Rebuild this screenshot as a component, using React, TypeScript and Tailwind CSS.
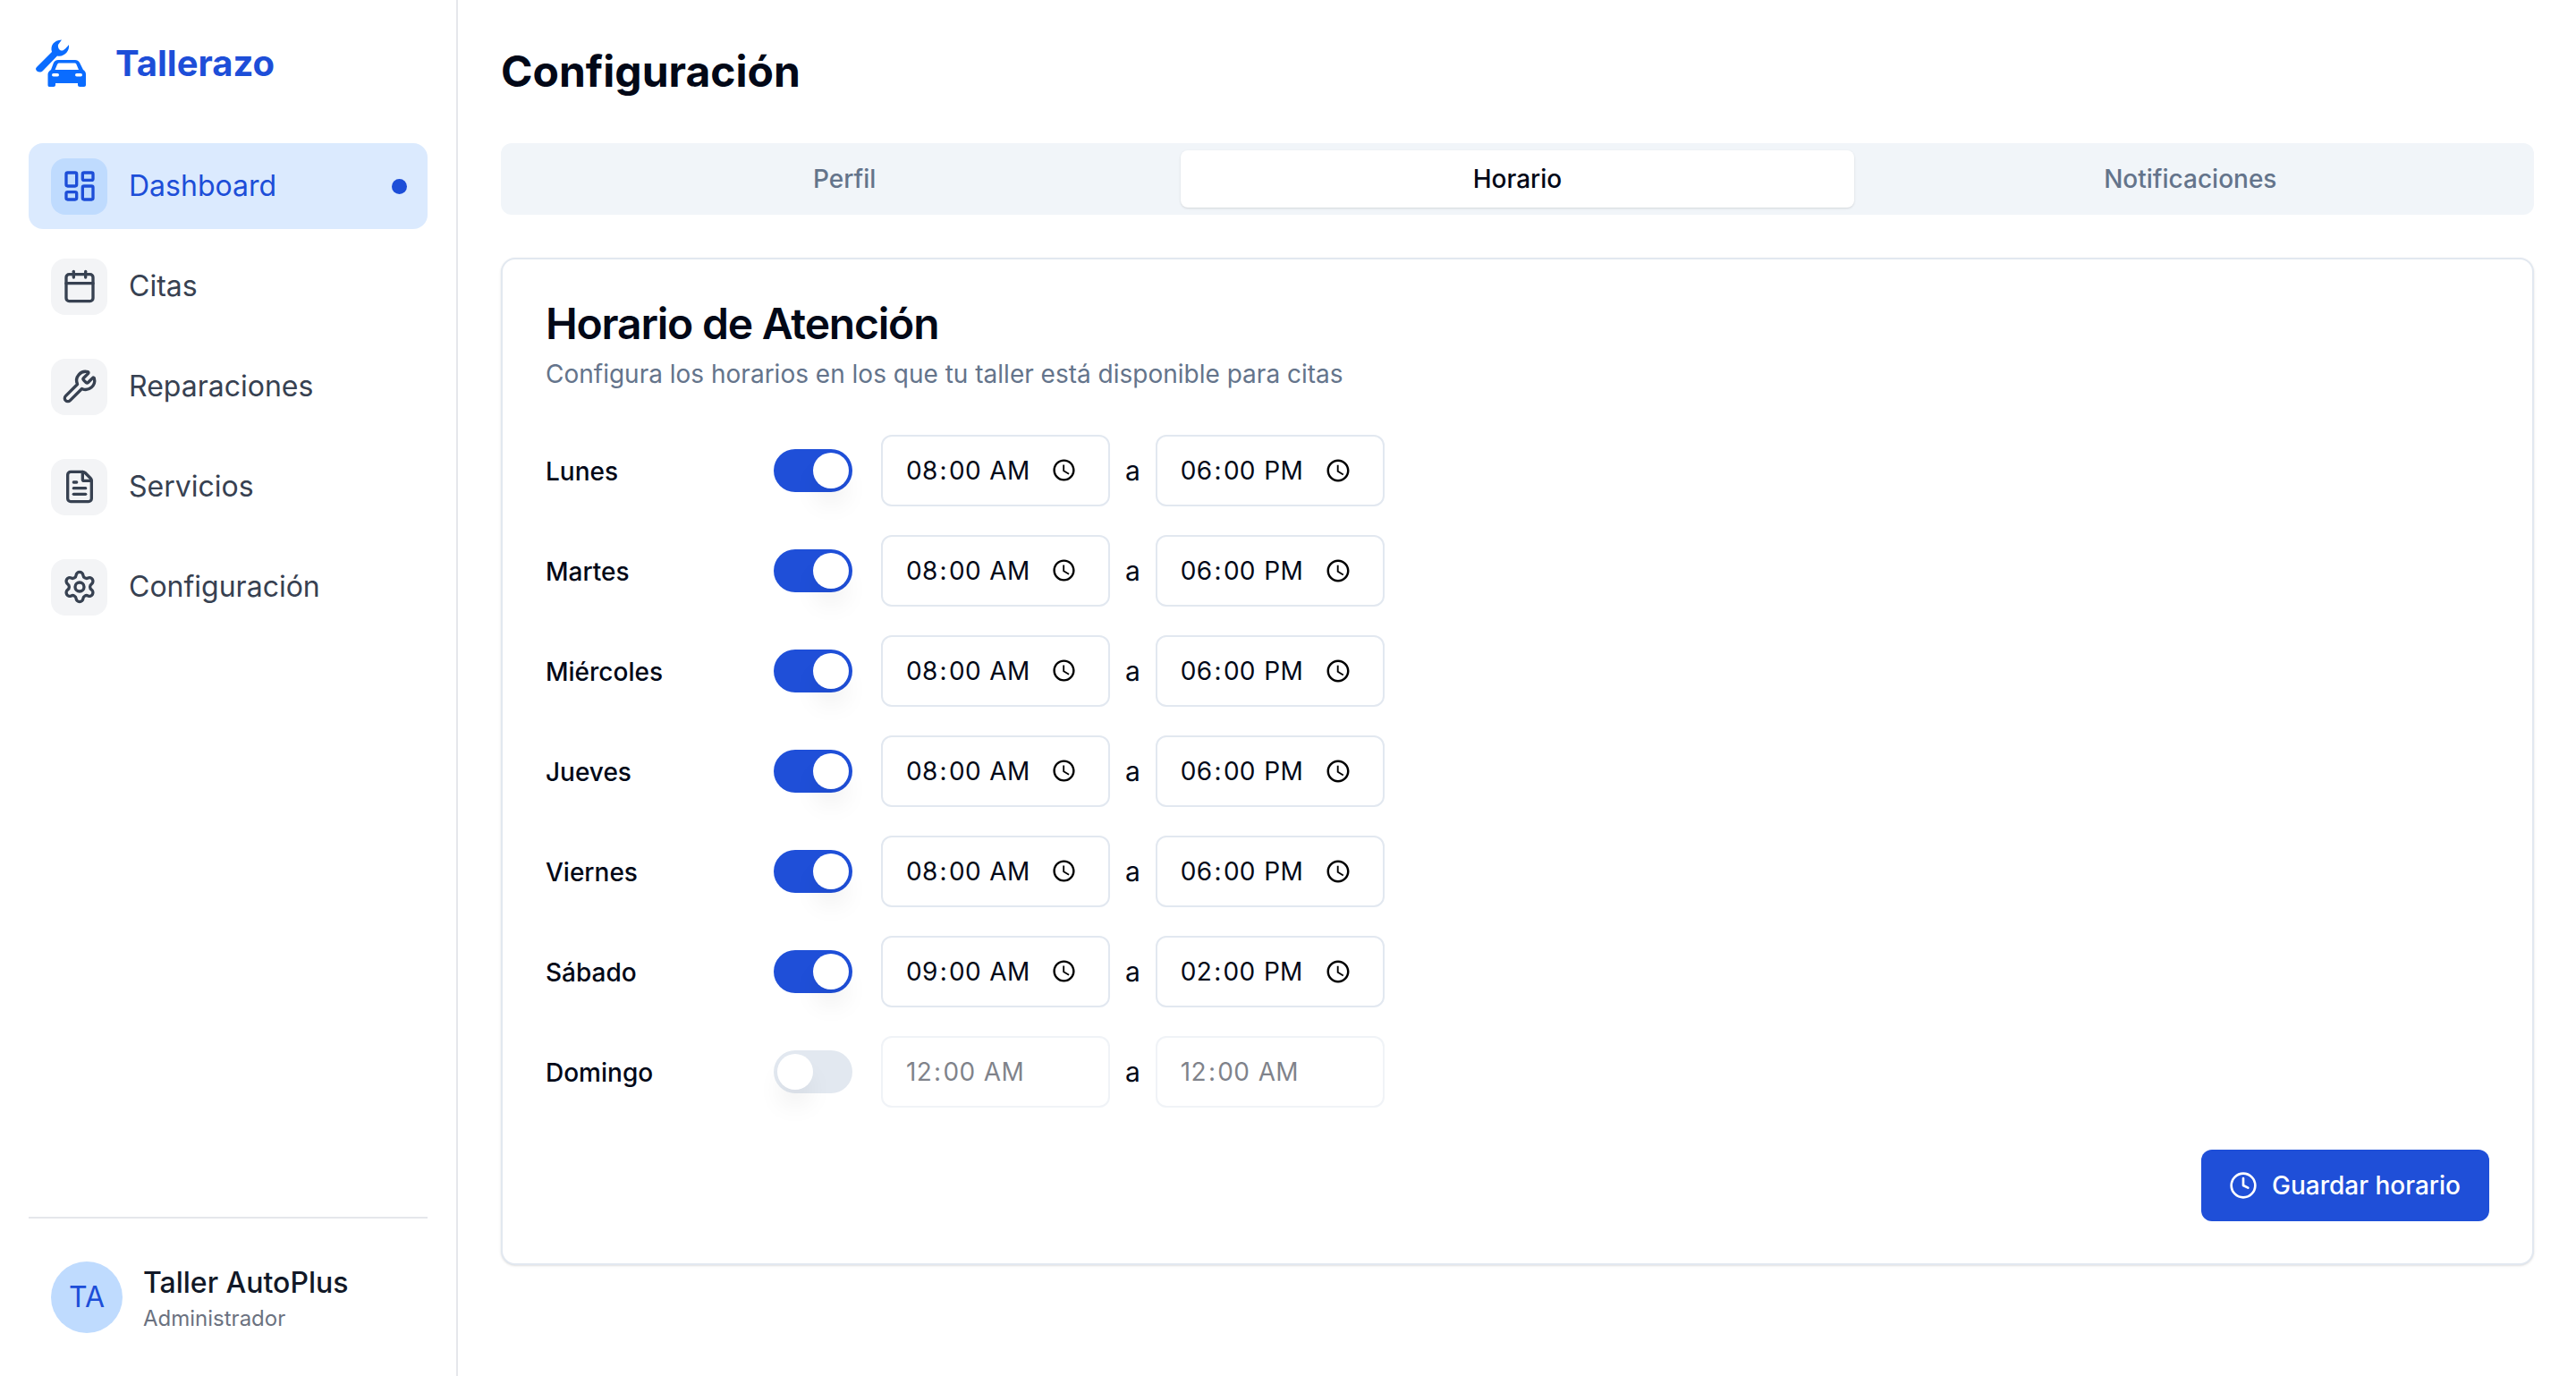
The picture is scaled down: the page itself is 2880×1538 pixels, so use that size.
import { Calendar, Clock, FileText, LayoutDashboard, Settings, Wrench } from "lucide-react";

const navItems = [
  { label: "Dashboard", icon: LayoutDashboard, active: true },
  { label: "Citas", icon: Calendar },
  { label: "Reparaciones", icon: Wrench },
  { label: "Servicios", icon: FileText },
  { label: "Configuración", icon: Settings },
];

const days = [
  { name: "Lunes", open: "08:00", close: "18:00", on: true },
  { name: "Martes", open: "08:00", close: "18:00", on: true },
  { name: "Miércoles", open: "08:00", close: "18:00", on: true },
  { name: "Jueves", open: "08:00", close: "18:00", on: true },
  { name: "Viernes", open: "08:00", close: "18:00", on: true },
  { name: "Sábado", open: "09:00", close: "14:00", on: true },
  { name: "Domingo", open: "00:00", close: "00:00", on: false },
];

function Logo() {
  return (
    <svg width="76" height="70" viewBox="0 0 76 70" fill="#0a6cff" className="shrink-0">
      <path d="M10 39 26 23C24 16 28 10 37 9.500L33 15C32.500 18 34 21 36.500 21.500 38.500 22 40.500 20.500 45 15 46 22 40 29 32 27.500L16 44C13 47 8 45 8 42 8 41 9 40 10 39Z" />
      <path
        fillRule="evenodd"
        stroke="#fff"
        strokeWidth="2.500"
        paintOrder="stroke"
        d="M33 32H52C54 32 56 33 57 35L61 43C63 44 64 46 64 48V60C64 61 63 62 62 62H57C56 62 55 61 55 60V58H30V60C30 61 29 62 28 62H23C22 62 21.500 61 21.500 60V48C21.500 46 23 44 25 43L28 35C29 33 31 32 33 32ZM33.500 35.500H51.500C52.500 35.500 53 36 53.500 37L56 43H29.500L32 37C32.500 36 33 35.500 33.500 35.500Z"
      />
      <rect x="26" y="47" width="8" height="3.500" rx="1.750" fill="#fff" />
      <rect x="52" y="47" width="8" height="3.500" rx="1.750" fill="#fff" />
    </svg>
  );
}

function Toggle({ on }: { on: boolean }) {
  return (
    <span
      className={`flex h-12 w-[88px] shrink-0 items-center rounded-full border-4 border-transparent ${
        on ? "justify-end bg-[#1f4fd8]" : "justify-start bg-[#e2e8f0]"
      }`}
    >
      <span className="h-10 w-10 rounded-full bg-white shadow-[0_20px_30px_-6px_rgba(0,0,0,0.1)]" />
    </span>
  );
}

function TimeInput({ value, disabled }: { value: string; disabled: boolean }) {
  return (
    <input
      type="time"
      disabled={disabled}
      defaultValue={value}
      className="h-20 w-[256px] rounded-xl border-2 border-[#e2e8f0] bg-white pr-[32px] pl-6 text-[28px] tracking-[0.3px] disabled:opacity-50 [&::-webkit-datetime-edit-ampm-field]:px-[2px] [&::-webkit-datetime-edit-hour-field]:px-[2px] [&::-webkit-datetime-edit-minute-field]:px-[2px]"
    />
  );
}

export default function App() {
  return (
    <div className="flex h-[1538px] bg-white font-['Inter',sans-serif] text-[#020817]">
      {/* sidebar */}
      <aside className="flex w-[512px] shrink-0 flex-col border-r-2 border-[#e5e7eb] px-8">
        <div className="flex h-[140px] items-center gap-[21px]">
          <Logo />
          <span className="mt-[2px] text-[40px] font-bold text-[#1d4ed8]">Tallerazo</span>
        </div>
        <nav className="mt-5 flex flex-1 flex-col gap-4">
          {navItems.map((item) => (
            <div
              key={item.label}
              className={`flex h-24 items-center gap-6 rounded-2xl pr-6 pl-[25px] ${
                item.active ? "bg-[#dbeafe] text-[#1d4ed8]" : "text-[#374151]"
              }`}
            >
              <span
                className={`flex h-[63px] w-[63px] items-center justify-center rounded-2xl ${
                  item.active ? "bg-[#bfdbfe]" : "bg-[#f3f4f6]"
                }`}
              >
                <item.icon size={40} strokeWidth={2} />
              </span>
              <span className="flex-1 text-[32px] leading-[48px]">{item.label}</span>
              {item.active && <span className="-mr-px h-[17px] w-[17px] rounded-full bg-[#1d4ed8]" />}
            </div>
          ))}
        </nav>
        <div className="flex h-[178px] items-center gap-[23px] border-t-2 border-[#e5e7eb] pr-6 pl-[25px]">
          <span className="flex h-20 w-20 items-center justify-center rounded-full bg-[#bfdbfe] text-[32px] text-[#1d4ed8]">
            TA
          </span>
          <div className="pt-[2px]">
            <div className="text-[32px] leading-[44px] font-medium text-[#111827]">Taller AutoPlus</div>
            <div className="mt-[2px] text-[24px] leading-8 text-[#6b7280]">Administrador</div>
          </div>
        </div>
      </aside>

      {/* main */}
      <main className="flex-1 pr-[47px] pl-12">
        <h1 className="flex h-40 items-center text-[48px] font-bold">Configuración</h1>

        <div className="flex h-20 items-center rounded-xl bg-[#f1f5f9] p-2 text-[28px] font-medium text-[#64748b]">
          <div className="flex flex-1 items-center justify-center">Perfil</div>
          <div className="flex h-16 flex-1 items-center justify-center rounded-lg bg-white text-[#020817] shadow-sm">
            Horario
          </div>
          <div className="flex flex-1 items-center justify-center">Notificaciones</div>
        </div>

        <section className="mt-12 h-[1126px] rounded-2xl border-2 border-[#e2e8f0] bg-white p-12 shadow-sm">
          <h2 className="text-[48px] leading-[48px] font-semibold tracking-tight">Horario de Atención</h2>
          <p className="mt-3 text-[28px] leading-10 text-[#64748b]">
            Configura los horarios en los que tu taller está disponible para citas
          </p>

          <div className="mt-12 flex flex-col gap-8">
            {days.map((day) => (
              <div key={day.name} className="flex items-center">
                <span className="mt-px w-[255px] text-[28px] font-medium">{day.name}</span>
                <Toggle on={day.on} />
                <div className="ml-8">
                  <TimeInput value={day.open} disabled={!day.on} />
                </div>
                <span className="mx-[17px] text-[30px]">a</span>
                <TimeInput value={day.close} disabled={!day.on} />
              </div>
            ))}
          </div>

          <div className="mt-[47px] flex justify-end">
            <button className="flex h-20 items-center gap-4 rounded-xl bg-[#1f4fd8] pr-8 pl-[31px] text-[28px] font-medium text-white">
              <Clock size={32} />
              Guardar horario
            </button>
          </div>
        </section>
      </main>
    </div>
  );
}
